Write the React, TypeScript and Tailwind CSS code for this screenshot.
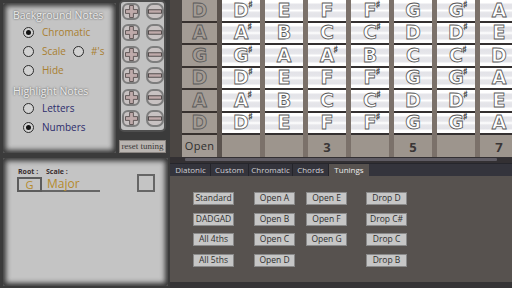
import React from "react";

const sans = "font-['Open_Sans','Noto_Sans',sans-serif]";

const strings: [string, string[]][] = [
    ["D", ["D#", "E", "F", "F#", "G", "G#", "A"]],
    ["A", ["A#", "B", "C", "C#", "D", "D#", "E"]],
    ["G", ["G#", "A", "A#", "B", "C", "C#", "D"]],
    ["D", ["D#", "E", "F", "F#", "G", "G#", "A"]],
    ["A", ["A#", "B", "C", "C#", "D", "D#", "E"]],
    ["D", ["D#", "E", "F", "F#", "G", "G#", "A"]],
];

const tuningCols: { ml: string; items: string[] }[] = [
    { ml: "ml-[23px]", items: ["Standard", "DADGAD", "All 4ths", "All 5ths"] },
    { ml: "ml-[20px]", items: ["Open A", "Open B", "Open C", "Open D"] },
    { ml: "ml-[11px]", items: ["Open E", "Open F", "Open G"] },
    { ml: "ml-[19px]", items: ["Drop D", "Drop C#", "Drop C", "Drop B"] },
];

const tabs = [
    { label: "Diatonic", w: "w-[40px]" },
    { label: "Custom", w: "w-[38px]" },
    { label: "Chromatic", w: "w-[44px]" },
    { label: "Chords", w: "w-[36px]" },
];

function Note({ n, open }: { n: string; open?: boolean }) {
    return (
        <span
            className={
                "relative font-['DejaVu_Sans',sans-serif] font-bold text-[19px] leading-none [-webkit-text-stroke:0.8px_#585858] " +
                (open ? "text-[#a39b94]" : "text-white")
            }
        >
            {n[0]}
            {n.length > 1 && (
                <span className="absolute left-full top-[-1px] ml-[-1px] text-[10px] font-bold text-[#4a4a4a] [-webkit-text-stroke:0.3px_#4a4a4a] leading-none">
                    ♯
                </span>
            )}
        </span>
    );
}

function Radio({ on }: { on?: boolean }) {
    return (
        <div className="w-[11px] h-[11px] rounded-full border-[1.5px] border-[#2b2b2b] bg-[#d2d2d2] flex items-center justify-center shrink-0">
            {on && <div className="w-[5px] h-[5px] rounded-full bg-[#111]" />}
        </div>
    );
}

function PlusBtn() {
    return (
        <div className="w-[18px] h-[17px] rounded-[6px] border-2 border-[#7d7d7d] bg-[#c8c2c2] flex items-center justify-center">
            <svg width="13" height="13" viewBox="0 0 13 13">
                <path
                    d="M4.6 0.5h3.8v4.1h4.1v3.8H8.4v4.1H4.6V8.4H0.5V4.6h4.1z"
                    fill="#bfaaaa"
                    stroke="#4a4242"
                    strokeWidth="0.8"
                />
            </svg>
        </div>
    );
}

function MinusBtn() {
    return (
        <div className="w-[18px] h-[17px] rounded-[7px] border-2 border-[#7d7d7d] bg-[#c8c2c2] flex items-center justify-center">
            <svg width="14" height="5" viewBox="0 0 14 5">
                <rect x="0.5" y="0.8" width="13" height="3.4" fill="#bfaaaa" stroke="#3a3434" strokeWidth="0.8" />
            </svg>
        </div>
    );
}

export default function App() {
    return (
        <div className={"w-[512px] h-[288px] overflow-hidden flex bg-[#3b3b3b] " + sans}>
            {/* left column */}
            <div className="w-[170px] shrink-0 flex flex-col">
                <div className="h-[157px] flex">
                    <div className="ml-[3px] mt-[3px] w-[113px] h-[150px] rounded-[2px] bg-[#c4c4c4] shadow-[inset_0_0_5px_3px_rgba(30,30,30,0.85)] pl-[10px] pt-[6px] flex flex-col">
                        <div className="h-[12px] text-[10.5px] leading-[12px] text-[#ececec] [text-shadow:0_0_2px_#3a3a3a]">
                            Background Notes
                        </div>
                        <div className="mt-[2px] h-[19px] flex items-center pl-[10px] text-[10px] text-[#a97f30]">
                            <Radio on />
                            <span className="ml-[8px]">Chromatic</span>
                        </div>
                        <div className="h-[19px] flex items-center pl-[10px] text-[10px] text-[#a97f30]">
                            <Radio />
                            <span className="ml-[8px]">Scale</span>
                            <div className="ml-[7px]">
                                <Radio />
                            </div>
                            <span className="ml-[7px]">#'s</span>
                        </div>
                        <div className="h-[19px] flex items-center pl-[10px] text-[10px] text-[#a97f30]">
                            <Radio />
                            <span className="ml-[8px]">Hide</span>
                        </div>
                        <div className="mt-[5px] h-[12px] text-[10.5px] leading-[12px] text-[#ececec] [text-shadow:0_0_2px_#3a3a3a]">
                            Highlight Notes
                        </div>
                        <div className="mt-[2px] h-[19px] flex items-center pl-[10px] text-[10px] text-[#2d2c6c]">
                            <Radio />
                            <span className="ml-[8px]">Letters</span>
                        </div>
                        <div className="h-[19px] flex items-center pl-[10px] text-[10px] text-[#2d2c6c]">
                            <Radio on />
                            <span className="ml-[8px]">Numbers</span>
                        </div>
                    </div>

                    <div className="ml-[3px] w-[47px] flex flex-col">
                        <div className="h-[132px] rounded-[5px] border-2 border-[#4e4e4e] bg-[#c2c2c2] flex flex-col pt-[1px] gap-[4.4px] pl-[1px]">
                            {strings.map((_, i) => (
                                <div key={i} className="flex gap-[6px]">
                                    <PlusBtn />
                                    <MinusBtn />
                                </div>
                            ))}
                        </div>
                        <div className="mt-[8px] h-[13px] bg-[#bab5b1] border border-[#8a8581] text-[9px] leading-[11px] text-[#3a3a3a] font-['Liberation_Serif',serif] text-center">
                            reset tuning
                        </div>
                    </div>
                </div>

                <div className="mt-[1px] ml-[3px] w-[165px] h-[128px] rounded-[2px] bg-[#c4c4c4] shadow-[inset_0_0_5px_3px_rgba(30,30,30,0.85)] pl-[14px] pt-[10px] flex">
                    <div className="flex flex-col">
                        <div className="flex text-[7px] font-bold text-[#3a2e2e] h-[9px] leading-[8px]">
                            <span className="ml-[1px] w-[28px]">Root :</span>
                            <span>Scale :</span>
                        </div>
                        <div className="flex h-[15px]">
                            <div className="w-[25px] h-[15px] border-2 border-[#5c5c5c] text-[11px] leading-[11px] text-[#b58a2c] flex items-center justify-center">
                                G
                            </div>
                            <div className="w-[58px] h-[15px] border-b-2 border-[#666] flex items-center text-[12px] leading-[12px] text-[#b58a2c] pl-[5px]">
                                Major
                            </div>
                        </div>
                    </div>
                    <div className="ml-[37px] mt-[6px] w-[18px] h-[18px] border-2 border-[#666]" />
                </div>
            </div>

            {/* right column */}
            <div className="w-[342px] shrink-0 flex flex-col">
                <div className="h-[157px] bg-[#4b4643] pl-[12px] flex flex-col">
                    {strings.map(([open, notes], r) => (
                        <div key={r} className="h-[22.5px] flex">
                            <div className="w-[35px] shrink-0 border-b-2 border-[#37312e] bg-[#a39b94] flex items-center justify-center">
                                <Note n={open} open />
                            </div>
                            <div className="w-[5px] shrink-0 bg-[#5b534e]" />
                            {notes.map((n, c) => (
                                <React.Fragment key={c}>
                                    <div className="w-[38px] shrink-0 border-b-2 border-[#343030] bg-[linear-gradient(to_bottom,#fff_0%,#fff_12%,#e3e3e8_22%,#e6e6ea_40%,#fff_50%,#e6e6ea_60%,#e3e3e8_78%,#fff_88%,#fff_100%)] flex items-center justify-center">
                                        <Note n={n} />
                                    </div>
                                    <div className="w-[5px] shrink-0 bg-[#7b716a]" />
                                </React.Fragment>
                            ))}
                        </div>
                    ))}
                    <div className="h-[22px] flex">
                        <div className="w-[35px] shrink-0 bg-[#a39b94] flex items-center justify-center text-[11px] text-[#2e2e2e] tracking-[0.3px]">
                            Open
                        </div>
                        <div className="w-[5px] shrink-0 bg-[#5b534e]" />
                        {[1, 2, 3, 4, 5, 6, 7].map((f) => (
                            <React.Fragment key={f}>
                                <div className="w-[38px] shrink-0 bg-[#9d958d] flex items-end justify-center pb-[2px] text-[13px] font-bold leading-[16px] text-[#3a3636]">
                                    {f === 3 || f === 5 || f === 7 ? f : ""}
                                </div>
                                <div className="w-[5px] shrink-0 bg-[#7b716a]" />
                            </React.Fragment>
                        ))}
                    </div>
                </div>

                <div className="h-[6px] bg-[#333033] pt-[1px] px-[15px]">
                    <div className="h-[3px] bg-[#5f5c64] rounded-[1px]" />
                </div>

                <div className="h-[13px] bg-[#34343c] flex pl-[1px] border-t border-[#26262c]">
                    {tabs.map((t) => (
                        <div
                            key={t.label}
                            className={t.w + " border-r border-[#24242a] flex items-center justify-center text-[8px] text-[#cfcfd4]"}
                        >
                            {t.label}
                        </div>
                    ))}
                    <div className="w-[40px] bg-[#57524f] flex items-center justify-center text-[8px] text-[#ededed]">
                        Tunings
                    </div>
                </div>

                <div className="h-[106px] bg-[#57524f] flex pt-[16px]">
                    {tuningCols.map((col, i) => (
                        <div key={i} className={col.ml + " w-[41px] flex flex-col gap-[7.5px]"}>
                            {col.items.map((t) => (
                                <div
                                    key={t}
                                    className="h-[13px] bg-[#c6c6c6] border border-[#8a8a8a] flex items-center justify-center text-[8.5px] leading-none text-[#2e2e2e]"
                                >
                                    {t}
                                </div>
                            ))}
                        </div>
                    ))}
                </div>
                <div className="flex-1 bg-[#363436]" />
            </div>
        </div>
    );
}
